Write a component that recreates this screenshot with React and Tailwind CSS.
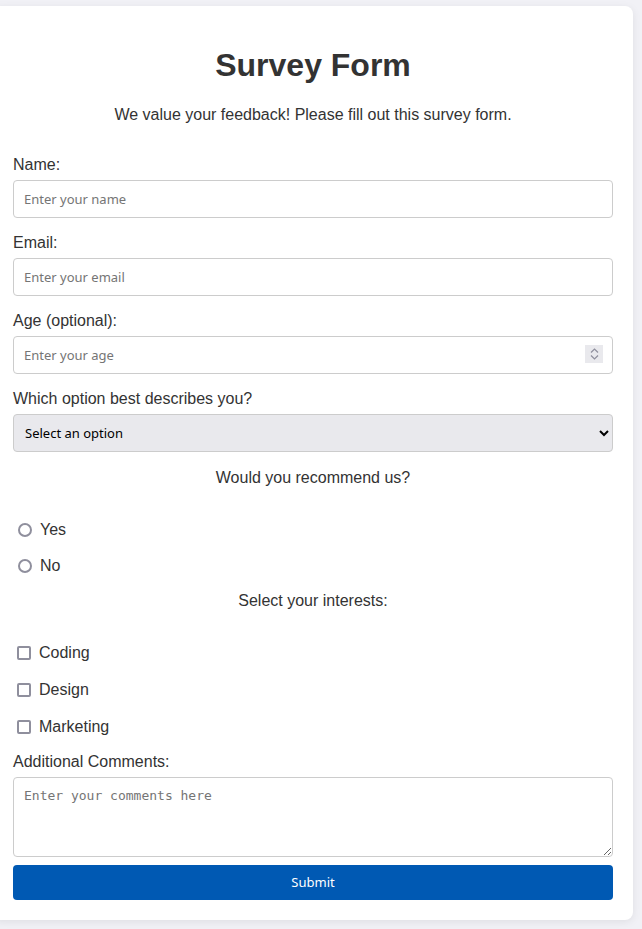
import React from 'react';

const label = "block text-[16px] leading-[19px] text-[#333] mb-[6px]";
const field = "block w-full h-[38px] px-[10px] border border-[#ccc] rounded-[4px] bg-white text-[13px] text-[#222] placeholder:text-[#757575] font-['Noto_Sans',sans-serif] mb-[15px] outline-none";

const App = () => {
  return (
    <div className="min-h-screen bg-[#f1f1f6] pt-[6px] pb-[9px] overflow-hidden font-['Liberation_Sans',Arial,sans-serif]">
      <div className="-ml-[7px] w-[640px] bg-white rounded-lg shadow-[0_2px_8px_rgba(0,0,0,0.08)] p-5">
        <h1 className="text-[32px] leading-[38px] font-bold text-[#333] text-center mt-[20px] mb-[22px]">Survey Form</h1>
        <p className="text-[16px] leading-[18px] text-[#333] text-center mb-[31px]">We value your feedback! Please fill out this survey form.</p>

        <form onSubmit={(e) => e.preventDefault()}>
          <label className={label}>Name:</label>
          <input type="text" placeholder="Enter your name" className={field} />

          <label className={label}>Email:</label>
          <input type="email" placeholder="Enter your email" className={field} />

          <label className={label}>Age (optional):</label>
          <div className="relative">
            <input type="number" placeholder="Enter your age" className={field + " [appearance:textfield] [&::-webkit-inner-spin-button]:appearance-none [&::-webkit-outer-spin-button]:appearance-none"} />
            <span className="absolute right-[10px] top-[9px] w-[18px] h-[18px] bg-[#e9e9ed] flex flex-col items-center justify-center gap-[2px] pointer-events-none">
              <svg width="9" height="5" viewBox="0 0 9 5" fill="none" stroke="#8f8f9d" strokeWidth="1.2"><path d="M1 4.5 L4.5 1 L8 4.5" /></svg>
              <svg width="9" height="5" viewBox="0 0 9 5" fill="none" stroke="#8f8f9d" strokeWidth="1.2"><path d="M1 0.5 L4.5 4 L8 0.5" /></svg>
            </span>
          </div>

          <label className={label}>Which option best describes you?</label>
          <select defaultValue="" className="block w-full h-[38px] px-[7px] border border-[#ccc] rounded-[4px] bg-[#e9e9ed] text-[13px] text-black font-['Noto_Sans',sans-serif] mb-[17px]">
            <option value="" disabled>Select an option</option>
            <option>Student</option>
            <option>Professional</option>
            <option>Other</option>
          </select>

          {/* recommend */}
          <p className="text-[16px] leading-[18px] text-[#333] text-center mb-[25px]">Would you recommend us?</p>
          {['Yes', 'No'].map(v => (
            <label key={v} className="flex items-center h-[36px] text-[16px] text-[#333]">
              <input type="radio" name="recommend" className="appearance-none ml-[5px] mr-[8px] my-0 w-[14px] h-[14px] rounded-full border-2 border-[#8f8f9d] bg-white checked:border-[4px] checked:border-[#0059b3]" />
              {v}
            </label>
          ))}

          {/* interests */}
          <p className="text-[16px] leading-[18px] text-[#333] text-center mt-[8px] mb-[24px]">Select your interests:</p>
          {['Coding', 'Design', 'Marketing'].map(v => (
            <label key={v} className="flex items-center h-[37px] text-[16px] text-[#333]">
              <input type="checkbox" className="appearance-none ml-[4px] mr-[8px] my-0 w-[14px] h-[14px] rounded-[2px] border-2 border-[#8f8f9d] bg-white checked:bg-[#0059b3] checked:border-[#0059b3]" />
              {v}
            </label>
          ))}

          <label className={label + " mt-[7px]"}>Additional Comments:</label>
          <textarea
            placeholder="Enter your comments here"
            className="block w-full h-[80px] p-[10px] border border-[#ccc] rounded-[4px] bg-white text-[13px] leading-[15px] placeholder:text-[#757575] font-['DejaVu_Sans_Mono',monospace] outline-none"
          ></textarea>
          <button type="submit" className="block w-full h-[35px] mt-[8px] bg-[#0059b3] text-white text-[13px] rounded-[4px] font-['Noto_Sans',sans-serif]">
            Submit
          </button>
        </form>
      </div>
    </div>
  );
};

export default App;
